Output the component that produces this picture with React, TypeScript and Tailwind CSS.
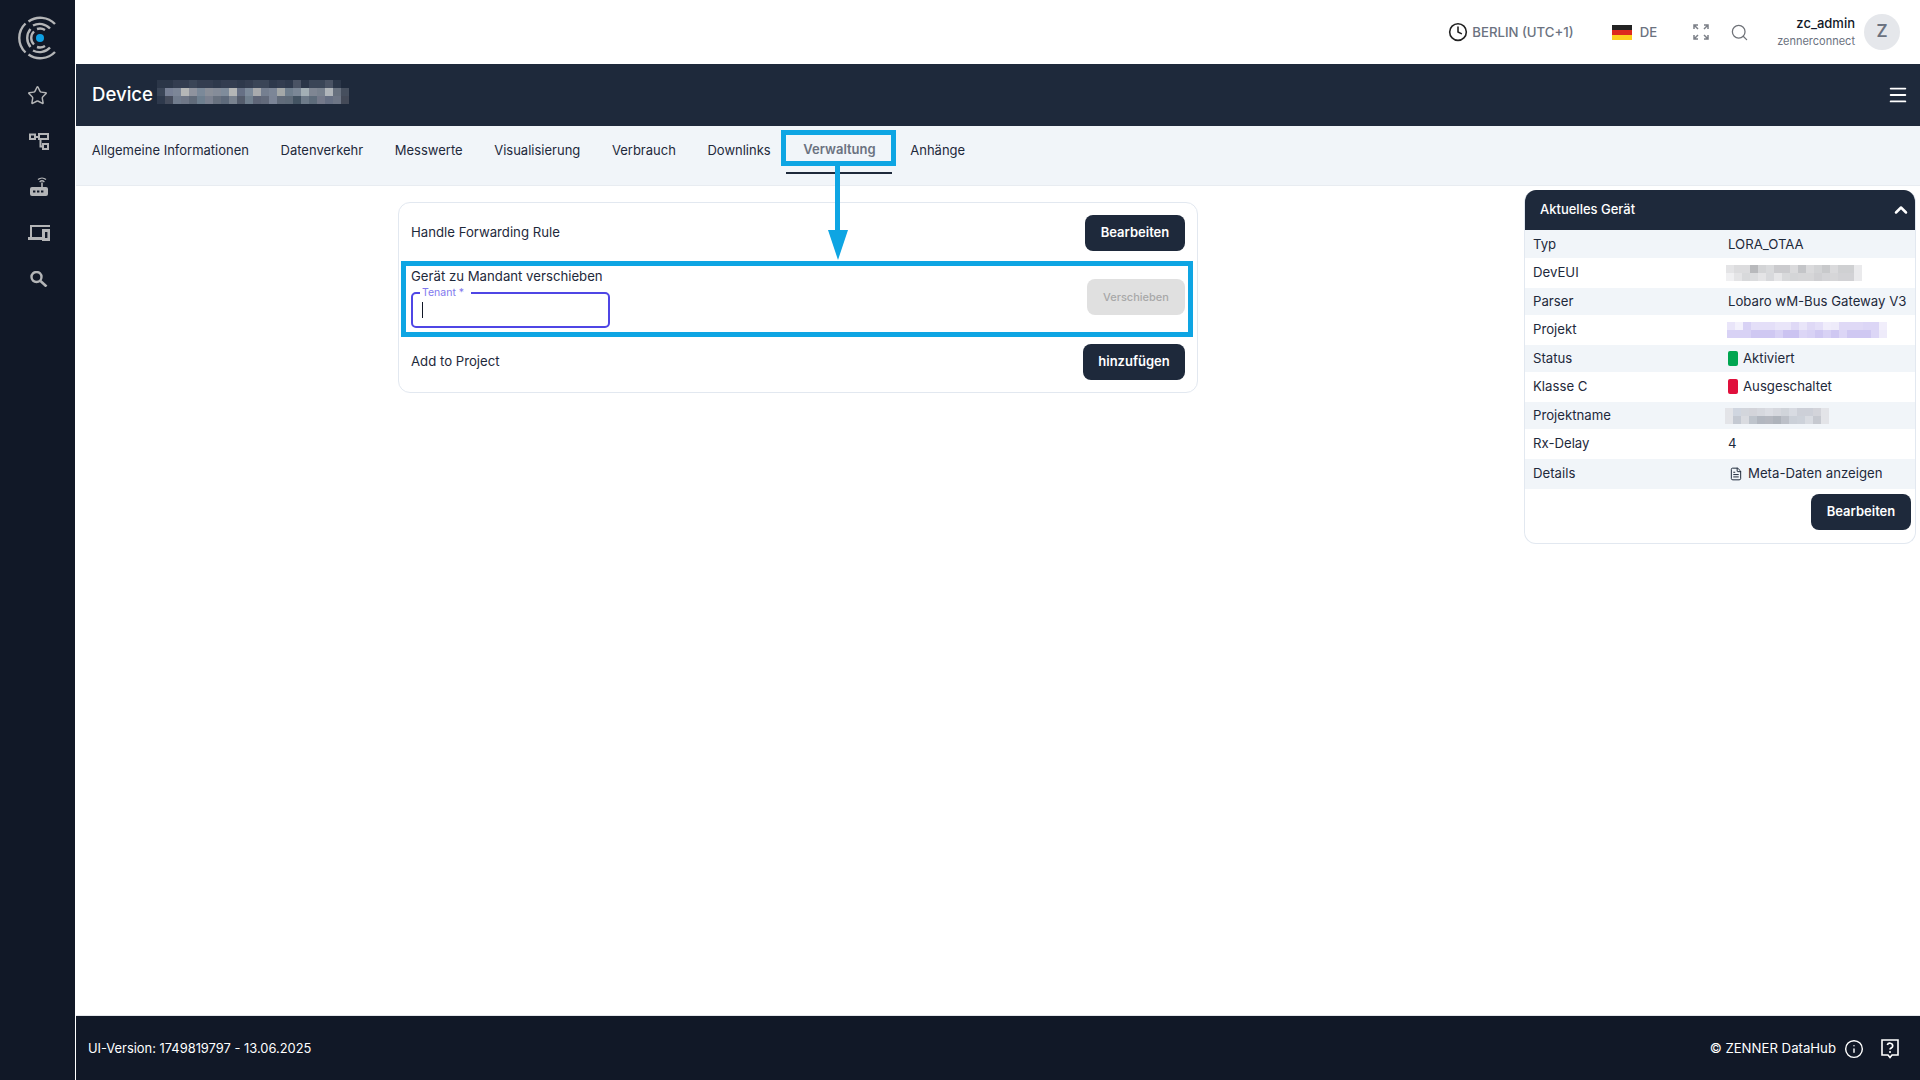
import React from 'react';
import { Star, Search, Clock, Menu, ChevronUp, Info, FileText } from 'lucide-react';

const tabs = ['Allgemeine Informationen', 'Datenverkehr', 'Messwerte', 'Visualisierung', 'Verbrauch', 'Downlinks', 'Verwaltung', 'Anhänge'];

// blurred-out values from the screenshot, one colour per 8px cell
const deviceBlur = [
  ['#2b3648','#2b3648','#333d50','#333d50','#3a4557','#333d50','#333d50','#2e394c','#333d50','#333d50','#2e394c','#333d50','#3a4557','#3a4557','#2e394c','#333d50','#2e394c','#4a5364','#2b3648','#3a4557','#3a4557','#4a5364','#2b3648','#1e293b'],
  ['#3a4557','#778095','#7c8697','#b5b7b7','#8f939e','#7b8999','#8a8f99','#858c99','#7f8c9b','#b4b6b6','#667085','#7d8b9b','#a8aaad','#757f90','#7c8697','#a4a8a8','#707f8e','#7b8796','#a3afb5','#7f8693','#79828f','#b0b5ba','#68717f','#464f5e'],
  ['#2e394c','#454c5c','#717c8d','#6f7787','#616b7a','#6e7f8f','#7b8190','#68717f','#5e6a7b','#79828f','#545c6c','#707f8e','#5e6577','#626a7b','#7b8496','#616b7a','#5e6a78','#435362','#6d7a89','#5e6c7b','#74798a','#666f83','#6d7585','#444a58'],
];
const devEuiBlur = [
  ['#e4e4e6','#dcdcde','#dcdcde','#b8b9bc','#d3d4d6','#d9dadc','#cbcbce','#cbcbce','#dadadc','#c4c5c8','#dadadc','#d2d3d5','#c8c9cb','#dadadc','#cfd0d2','#cfd0d2','#eaeaec'],
  ['#f0f0f2','#e4e4e6','#d8d9db','#dbdcde','#e4e4e6','#d8d9dc','#e6e6e8','#d8d9db','#d4d5d7','#d6d6d8','#d6d6d8','#cfcfd2','#d4d4d7','#d6d6d8','#d2d2d5','#d2d2d5','#eaeaec'],
];
const projektBlur = [
  ['#e9e5f9','#f3f1fc','#d8d2f5','#e4dff8','#e4dff8','#e4dff8','#e9e5f9','#e9e5f9','#dfd9f6','#e9e5f9','#dfd9f6','#e4dff8','#f0edfb','#eeebfa','#dfd9f6','#dfd9f6','#dfd9f6','#dcd6f6','#dcd6f6','#f1eefb'],
  ['#d8d2f5','#d8d2f5','#d8d2f5','#cfc8f2','#cfc8f2','#cfc8f2','#d8d2f5','#cbc3f1','#cbc3f1','#dcd6f6','#d8d2f5','#cfc8f2','#d8d2f5','#cfc8f2','#dcd6f6','#cfc8f2','#cfc8f2','#cfc8f2','#dcd6f6','#eeebfa'],
];
const projektnameBlur = [
  ['#e3e4e8','#d0d6e0','#d3d6dc','#d3d4da','#d6d8de','#dbdde3','#d6d8de','#d0d4da','#d8dbe2','#cdd0d8','#cdd0d8','#d3d4da','#e3e4e8'],
  ['#e3e4e8','#c4c9d2','#d9dbe0','#bec4cc','#b2b7c0','#b5b8c0','#aeb3bb','#bcc0c8','#cbd0d8','#cdd2da','#d9dce2','#c6c9d0','#e3e4e8'],
];

const Blur = ({ rows }: { rows: string[][] }) => (
  <div className="flex flex-col">
    {rows.map((row, i) => (
      <div key={i} className="flex">
        {row.map((c, j) => (
          <span key={j} className="block w-[8px] h-[8px]" style={{ backgroundColor: c }} />
        ))}
      </div>
    ))}
  </div>
);

const Logo = () => (
  <svg width="56" height="56" viewBox="0 0 56 56" fill="none" stroke="#b4b5b7" strokeWidth="2.4">
    <path d="M43 14 A20.5 20.5 0 0 0 16.5 11.5" />
    <path d="M13.5 13.5 A20 20 0 0 0 13.5 42.5" />
    <path d="M16.5 44.5 A20.5 20.5 0 0 0 43 42" />
    <path d="M38 18.5 A14 14 0 0 0 21 15.5" />
    <path d="M18.5 19 A14 14 0 0 0 18.5 37" />
    <path d="M21 40.5 A14 14 0 0 0 38 37.5" />
    <path d="M22 21.5 A9 9 0 0 0 22 34.5" />
    <path d="M25 19 A9.5 9.5 0 0 1 33 20" />
    <path d="M25 37 A9.5 9.5 0 0 0 33 36" />
    <circle cx="28" cy="28" r="4" fill="#0ea0e4" stroke="none" />
  </svg>
);

const NetworkIcon = () => (
  <svg width="20" height="17" viewBox="0 0 20 17" fill="none" stroke="#b4b5b7" strokeWidth="2">
    <rect x="1" y="1.5" width="5" height="4.5" />
    <rect x="10" y="1" width="9" height="5" />
    <rect x="14" y="11" width="5" height="5" />
    <path d="M6 4h4M11.5 6v7.5H14" />
  </svg>
);

const RouterIcon = () => (
  <svg width="20" height="20" viewBox="0 0 20 20" fill="none" stroke="#b4b5b7">
    <rect x="1" y="10" width="18" height="9" rx="2" fill="#b4b5b7" stroke="none" />
    <path d="M4 14.5h2.4M8 14.5h2.4M12 14.5h2.4" stroke="#111827" strokeWidth="2" />
    <path d="M13 10V5.5" strokeWidth="1.6" />
    <path d="M9 2.6A6 6 0 0 1 17 2.6M10.6 5A3.4 3.4 0 0 1 15.4 5" strokeWidth="1.3" />
  </svg>
);

const DevicesIcon = () => (
  <svg width="22" height="16" viewBox="0 0 22 16" fill="none" stroke="#b4b5b7">
    <path d="M3 12.5V1h19" strokeWidth="2" />
    <path d="M0 13.5h14" strokeWidth="3" />
    <path d="M14 4h8v12h-8z" fill="#b4b5b7" stroke="none" />
    <rect x="17" y="7" width="2.4" height="6" fill="#111827" stroke="none" />
  </svg>
);

const ThickSearchIcon = () => (
  <svg width="18" height="16" viewBox="0 0 18 16" fill="none" stroke="#b4b5b7">
    <circle cx="6.5" cy="6" r="5" strokeWidth="2.4" />
    <path d="M10.5 10l6 5.5" strokeWidth="2.6" />
  </svg>
);

const ExpandIcon = () => (
  <svg width="16" height="16" viewBox="0 0 16 16" fill="none" stroke="#7b7f87" strokeWidth="1.5">
    <path d="M1 5V1h4M1 1l4 4" />
    <path d="M15 5V1h-4M15 1l-4 4" />
    <path d="M1 11v4h4M1 15l4-4" />
    <path d="M15 11v4h-4M15 15l-4-4" />
  </svg>
);

const FlagDe = () => (
  <svg width="20" height="15" viewBox="0 0 20 15">
    <rect width="20" height="5" fill="#222222" />
    <rect y="5" width="20" height="5" fill="#dd2a1e" />
    <rect y="10" width="20" height="5" fill="#fdcf1e" />
  </svg>
);

const HelpIcon = () => (
  <svg width="18" height="20" viewBox="0 0 18 20" fill="none" stroke="#ffffff" strokeWidth="1.6">
    <path d="M1 1h16v15h-6l-2 2.5L7 16H1z" />
    <path d="M6.3 6a2.8 2.8 0 0 1 5.4.9c0 1.9-2.7 2.2-2.7 3.6" strokeWidth="1.7" />
    <path d="M9 13h.01" strokeWidth="2" strokeLinecap="round" />
  </svg>
);

const DarkButton = ({ label, className }: { label: string; className: string }) => (
  <button className={`h-[36px] rounded-lg bg-[#1e293b] text-white text-[13px] font-semibold pb-[1px] ${className}`}>{label}</button>
);

const Row = ({ label, odd, h, labelClass = '', children }: { label: string; odd: boolean; h: string; labelClass?: string; children: React.ReactNode }) => (
  <div className={`flex items-center pl-[8px] text-[13.2px] text-[#1e293b] ${h} ${odd ? 'bg-[#f1f5f9]' : 'bg-white'}`}>
    <span className={`w-[195px] shrink-0 ${labelClass}`}>{label}</span>
    {children}
  </div>
);

export default function App() {
  return (
    <div className="flex h-screen w-full overflow-hidden bg-white font-['Inter',sans-serif] text-[#1e293b]">
      {/* Sidebar */}
      <aside className="w-[75px] shrink-0 bg-[#111827] flex flex-col items-center pt-[10px]">
        <div className="ml-[5px]"><Logo /></div>
        <div className="mt-[6px] flex flex-col items-center">
          <div className="h-[46px] flex items-center"><Star size={21} color="#b4b5b7" strokeWidth={1.7} /></div>
          <div className="h-[46px] flex items-center ml-[2px]"><NetworkIcon /></div>
          <div className="h-[46px] flex items-center ml-[2px]"><RouterIcon /></div>
          <div className="h-[46px] flex items-center ml-[2px]"><DevicesIcon /></div>
          <div className="h-[46px] flex items-center ml-[2px]"><ThickSearchIcon /></div>
        </div>
      </aside>

      <div className="ml-[1px] flex-1 min-w-0 flex flex-col">
        {/* Top bar */}
        <header className="h-[64px] shrink-0 flex items-center justify-end pr-[20px]">
          <Clock size={20} color="#222222" strokeWidth={1.9} />
          <span className="ml-[4px] pt-[2px] text-[13.2px] font-medium text-[#6b7280]">BERLIN (UTC+1)</span>
          <div className="ml-[38px]"><FlagDe /></div>
          <span className="ml-[8px] pt-[2px] text-[13.2px] font-medium text-[#6b7280]">DE</span>
          <div className="ml-[36px]"><ExpandIcon /></div>
          <Search size={19} color="#6f7278" strokeWidth={1.6} className="ml-[21px]" />
          <div className="ml-[28px] flex flex-col items-end -mt-[2px]">
            <span className="text-[13px] leading-[20px] font-medium text-[#111827]">zc_admin</span>
            <span className="text-[11px] leading-[16px] text-[#6b7280]">zennerconnect</span>
          </div>
          <div className="ml-[9px] w-[36px] h-[36px] rounded-full bg-[#e5e7eb] flex items-center justify-center text-[17px] font-semibold text-[#6b7280]">Z</div>
        </header>

        {/* Device title */}
        <div className="h-[62px] shrink-0 bg-[#1e293b] flex items-center pl-[16px] pr-[11px]">
          <span className="text-[18.6px] font-medium text-white">Device</span>
          <div className="ml-[4px] mb-[6px]"><Blur rows={deviceBlur} /></div>
          <Menu size={22} color="#ffffff" strokeWidth={2} className="ml-auto" />
        </div>

        {/* Tabs */}
        <nav className="h-[60px] shrink-0 bg-[#f1f5f9] border-b border-[#e8ecf1] flex items-start">
          {tabs.map((t, i) => (
            <div
              key={t}
              className={`h-[48px] pt-[2px] flex items-center text-[13px] ${i === 6 ? 'w-[106px] mr-[2px] justify-center border-b-2 border-[#1e293b] font-semibold text-[#6b7280]' : 'px-[15.8px]'}`}
            >
              {t}
            </div>
          ))}
        </nav>

        {/* Content */}
        <main className="relative flex-1 min-h-0 flex items-start pl-[322px] pt-[4px]">
          <section className="mt-[12px] w-[800px] h-[191px] shrink-0 border border-[#e2e8f0] rounded-xl px-[12px] text-[13.2px]">
            <div className="h-[60px] flex items-center justify-between">
              <span>Handle Forwarding Rule</span>
              <DarkButton label="Bearbeiten" className="w-[100px]" />
            </div>
            <div className="h-[68px] flex items-center justify-between">
              <div>
                <div className="h-[20px] leading-[20px] -mt-[1px]">Gerät zu Mandant verschieben</div>
                <div className="relative mt-[6px] w-[199px] h-[36px] border-2 border-[#4f46e5] rounded-[5px] flex items-center pl-[9px]">
                  <span className="absolute left-[7px] -top-[7px] bg-white pl-[2px] pr-[7px] text-[10.5px] leading-[12px] text-[#8178ee]">Tenant *</span>
                  <span className="block w-px h-[16px] bg-[#111827] mt-[1px]" />
                </div>
              </div>
              <button className="w-[98px] h-[36px] rounded-lg bg-[#e0e0e0] text-[#a8a8a8] text-[11px] font-medium">Verschieben</button>
            </div>
            <div className="h-[60px] flex items-center justify-between pt-[2px]">
              <span>Add to Project</span>
              <DarkButton label="hinzufügen" className="w-[102px]" />
            </div>
          </section>

          {/* Current device panel */}
          <section className="ml-[326px] w-[392px] shrink-0 border border-[#e2e8f0] border-t-0 rounded-xl overflow-hidden">
            <div className="h-[40px] bg-[#1e293b] text-white text-[13px] font-medium flex items-center justify-between pl-[15px] pr-[4px]">
              <span className="pb-[1px]">Aktuelles Gerät</span>
              <ChevronUp size={20} strokeWidth={3} />
            </div>
            <Row label="Typ" odd h="h-[28px]" labelClass="pt-[2px]"><span className="pt-[2px]">LORA_OTAA</span></Row>
            <Row label="DevEUI" odd={false} h="h-[30px]" labelClass="pb-[1px]"><div className="-ml-[2px]"><Blur rows={devEuiBlur} /></div></Row>
            <Row label="Parser" odd h="h-[27px]"><span className="whitespace-nowrap">Lobaro wM-Bus Gateway V3</span></Row>
            <Row label="Projekt" odd={false} h="h-[30px]" labelClass="pb-[1px]"><div className="-ml-[1px]"><Blur rows={projektBlur} /></div></Row>
            <Row label="Status" odd h="h-[27px]">
              <span className="block w-[10px] h-[15px] rounded-[2px] bg-[#00a651]" />
              <span className="ml-[5px]">Aktiviert</span>
            </Row>
            <Row label="Klasse C" odd={false} h="h-[30px]" labelClass="pb-[1px]">
              <span className="block w-[10px] h-[15px] rounded-[2px] bg-[#e0103c] mb-[1px]" />
              <span className="ml-[5px]">Ausgeschaltet</span>
            </Row>
            <Row label="Projektname" odd h="h-[27px]"><div className="-ml-[3px]"><Blur rows={projektnameBlur} /></div></Row>
            <Row label="Rx-Delay" odd={false} h="h-[30px]" labelClass="pb-[1px]"><span>4</span></Row>
            <Row label="Details" odd h="h-[30px]" labelClass="pb-[1px]">
              <FileText size={14} strokeWidth={1.7} className="ml-[1px] mb-[1px]" />
              <span className="ml-[5px] whitespace-nowrap pb-[1px]">Meta-Daten anzeigen</span>
            </Row>
            <div className="h-[54px] flex justify-end pt-[5px] pr-[4px]">
              <DarkButton label="Bearbeiten" className="w-[100px]" />
            </div>
          </section>

          {/* Annotation overlay */}
          <div className="absolute left-[705px] -top-[56px] w-[115px] h-[36px] border-[5px] border-[#0ea5e3]" />
          <div className="absolute left-[759px] -top-[20px] w-[5px] h-[66px] bg-[#0ea5e3]" />
          <svg className="absolute left-[752px] top-[44px]" width="20" height="30" viewBox="0 0 20 30">
            <path d="M0 0H20L10 30Z" fill="#0ea5e3" />
          </svg>
          <div className="absolute left-[325px] top-[75px] w-[792px] h-[76px] border-[5px] border-[#0ea5e3]" />
        </main>

        {/* Footer */}
        <footer className="h-[65px] shrink-0 bg-[#111827] border-t border-[#e5e7eb] flex items-center pt-[2px] pl-[12px] pr-[21px] text-white">
          <span className="text-[12.9px]">UI-Version: 1749819797 - 13.06.2025</span>
          <span className="ml-auto text-[13.2px]">© ZENNER DataHub</span>
          <Info size={20} strokeWidth={1.7} className="ml-[8px]" />
          <div className="ml-[17px]"><HelpIcon /></div>
        </footer>
      </div>
    </div>
  );
}
